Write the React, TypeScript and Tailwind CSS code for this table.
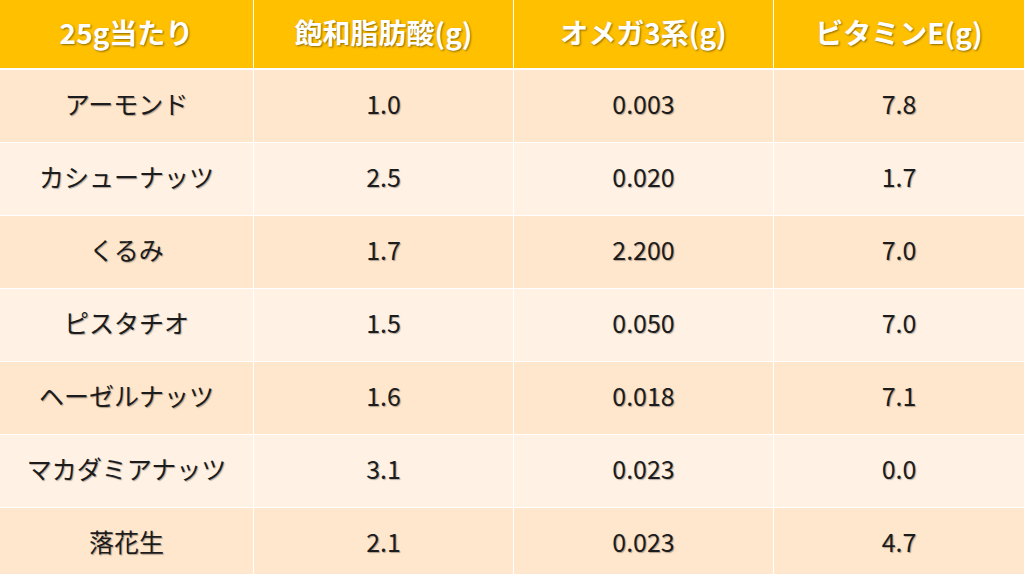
import React from "react";

const header = ["25g当たり", "飽和脂肪酸(g)", "オメガ3系(g)", "ビタミンE(g)"];
const rows = [
  ["アーモンド", "1.0", "0.003", "7.8"],
  ["カシューナッツ", "2.5", "0.020", "1.7"],
  ["くるみ", "1.7", "2.200", "7.0"],
  ["ピスタチオ", "1.5", "0.050", "7.0"],
  ["ヘーゼルナッツ", "1.6", "0.018", "7.1"],
  ["マカダミアナッツ", "3.1", "0.023", "0.0"],
  ["落花生", "2.1", "0.023", "4.7"],
];

export default function App() {
  return (
    <div
      className="w-[1024px] h-[574px] overflow-hidden bg-white"
      style={{ fontFamily: '"Noto Sans CJK JP", "Noto Sans", sans-serif' }}
    >
      <div className="grid grid-cols-[253px_259px_259px_1fr] gap-x-px h-[68px] bg-white border-b-2 border-white box-content">
        {header.map((h, i) => (
          <div
            key={i}
            className="bg-[#FFC000] flex items-center justify-center pb-1 text-white font-bold text-[28px] [text-shadow:1px_1px_2px_rgba(0,0,0,0.45)]"
          >
            {h}
          </div>
        ))}
      </div>
      {rows.map((r, ri) => (
        <div
          key={ri}
          className="grid grid-cols-[253px_259px_259px_1fr] gap-x-px h-[72px] border-b border-white box-content bg-white"
        >
          {r.map((c, ci) => (
            <div
              key={ci}
              className={`${ri % 2 === 0 ? "bg-[#FFE7CD]" : "bg-[#FFF2E5]"} flex items-center justify-center pb-1 text-[#1c1c1c] text-[25px] [text-shadow:1px_1px_1px_rgba(0,0,0,0.3)]`}
            >
              {c}
            </div>
          ))}
        </div>
      ))}
    </div>
  );
}
